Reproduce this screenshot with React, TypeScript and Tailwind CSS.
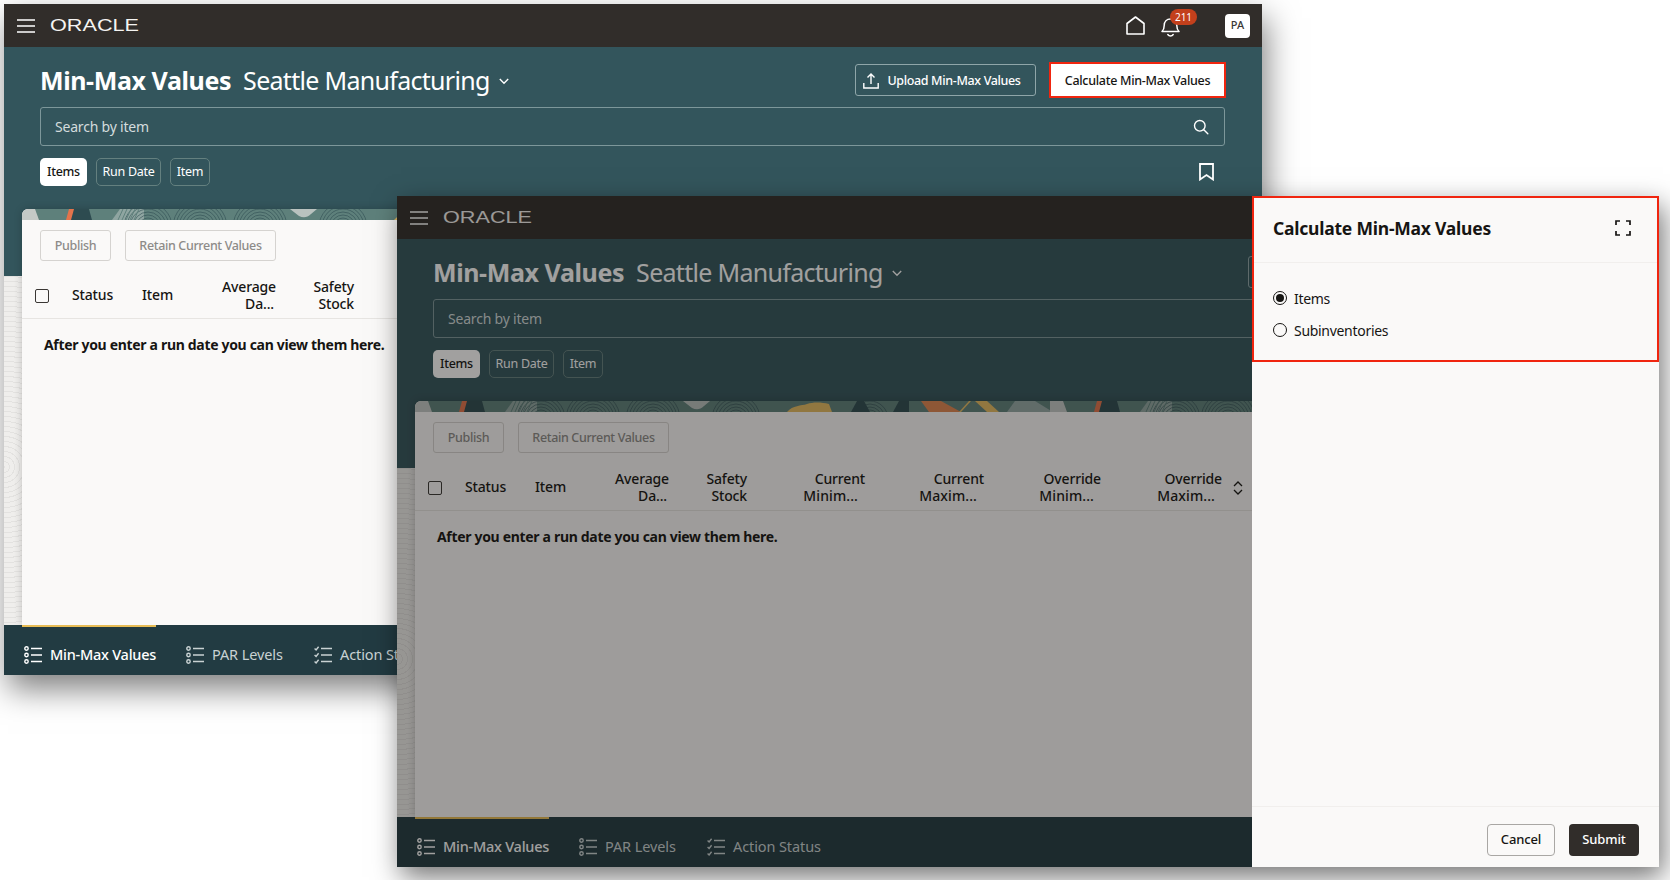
import React from "react";

const Hamburger = () => (
  <svg width="18" height="14" viewBox="0 0 18 14" fill="none" stroke="currentColor" strokeWidth="1.6">
    <path d="M0 1h18M0 7h18M0 13h18" />
  </svg>
);

const Logo = () => (
  <svg width="96" height="16" viewBox="0 0 96 16" className="block overflow-visible">
    <text x="0" y="13" textLength="89" lengthAdjust="spacingAndGlyphs" fontFamily="'Liberation Sans', sans-serif" fontSize="16.6" fill="#f5f4f2">
      ORACLE
    </text>
  </svg>
);

const HomeIcon = () => (
  <svg width="19" height="19" viewBox="0 0 19 19" fill="none" stroke="white" strokeWidth="1.6" strokeLinejoin="round">
    <path d="M1 7.5 9.5 1 18 7.5V18H1Z" />
  </svg>
);

const BellIcon = () => (
  <svg width="19" height="20" viewBox="0 0 19 20" fill="none" stroke="white" strokeWidth="1.5" strokeLinejoin="round" strokeLinecap="round">
    <path d="M1 14.5c1.6-1.4 2.2-3 2.2-6C3.2 4.7 5.8 2 9.5 2s6.300 2.700 6.300 6.500c0 3 .6 4.600 2.200 6Z" />
    <path d="M6.800 17.500c.7 1 1.600 1.500 2.700 1.500s2-.5 2.700-1.500" />
  </svg>
);

const UploadIcon = () => (
  <svg width="16" height="16" viewBox="0 0 16 16" fill="none" stroke="white" strokeWidth="1.4">
    <path d="M8 11V1M4.500 4.500 8 1l3.500 3.500M.8 10v5h14.400v-5" />
  </svg>
);

const SearchIcon = () => (
  <svg width="16" height="16" viewBox="0 0 16 16" fill="none" stroke="white" strokeWidth="1.4" strokeLinecap="round">
    <circle cx="6.800" cy="6.800" r="5.300" />
    <path d="m10.800 10.800 4 4" />
  </svg>
);

const BookmarkIcon = () => (
  <svg width="15" height="18" viewBox="0 0 15 18" fill="none" stroke="white" strokeWidth="1.8">
    <path d="M1 1h13v15.500l-6.500-4.500L1 16.500Z" />
  </svg>
);

const Chevron = () => (
  <svg width="10" height="7" viewBox="0 0 10 7" fill="none" stroke="white" strokeWidth="1.4">
    <path d="m.8 1 4.200 4.200L9.200 1" />
  </svg>
);

const ListIcon = () => (
  <svg width="18" height="18" viewBox="0 0 18 18" fill="none" stroke="currentColor" strokeWidth="1.4">
    <circle cx="2.500" cy="2.500" r="1.700" />
    <circle cx="2.500" cy="9" r="1.700" />
    <circle cx="2.500" cy="15.500" r="1.700" />
    <path d="M7 2.500h11M7 9h11M7 15.500h11" strokeWidth="1.600" />
  </svg>
);

const ChecksIcon = () => (
  <svg width="18" height="18" viewBox="0 0 18 18" fill="none" stroke="currentColor" strokeWidth="1.4">
    <path d="m.6 2.500 1.500 1.500L4.600.8M.6 9l1.500 1.500 2.500-3.200M.6 15.500 2.100 17l2.500-3.200" />
    <path d="M7 2.500h11M7 9h11M7 15.500h11" strokeWidth="1.600" />
  </svg>
);

const SortIcon = () => (
  <svg width="10" height="14" viewBox="0 0 10 14" fill="none" stroke="#161513" strokeWidth="1.300">
    <path d="m1 5 4-4 4 4M1 9l4 4 4-4" />
  </svg>
);

const ExpandIcon = () => (
  <svg width="16" height="16" viewBox="0 0 16 16" fill="none" stroke="#161513" strokeWidth="1.700">
    <path d="M1 5V1h4M11 1h4v4M15 11v4h-4M5 15H1v-4" />
  </svg>
);

const arcs: [number, number][] = [
  [126, 24],
  [178, 27],
  [238, 27],
  [321, 24],
  [455, 18],
];

const Strip = ({ id }: { id: string }) => (
  <svg width="1240" height="11" className="block shrink-0">
    <defs>
      <pattern id={id} x="0" y="0" width="635" height="11" patternUnits="userSpaceOnUse">
        <rect width="635" height="11" fill="#5e807b" />
        <path d="M0 0h13l4 11H0Z" fill="#c4c9c6" />
        <path d="M50 0h17l3 11H46Z" fill="#2d4b50" />
        <path d="M44 11l3-11h5l-3 11Z" fill="#e3734b" />
        <path d="M90 11l8-11h24v11Z" fill="#8fa5a1" />
        <path d="M268 0h27l-6 5c-4 4-8 4-12 2Z" fill="#b9c2bf" />
        {arcs.map(([cx, rmax]) =>
          [3, 6, 9, 12, 15, 18, 21, 24, 27]
            .filter((r) => r <= rmax)
            .map((r) => <circle key={`${cx}-${r}`} cx={cx} cy="18" r={r} fill="none" stroke="#2d4b50" strokeWidth="0.6" />)
        )}
        <path d="M96 11l5-11M100 11l5-11M104 11l5-11M108 11l5-11M112 11l5-11" stroke="#5e807b" strokeWidth="1" />
        <path d="M372 11c6-7 14-6 20-8s14-2 22 0l3 8Z" fill="#e4bb62" />
        <path d="M436 11l6-11h7l6 11Z" fill="#2d4b50" />
        <path d="M478 11l6-11h10v11Z" fill="#2d4b50" />
        <path d="M506 0h20l20 11h-32Z" fill="#e08550" />
        <path d="M544 11l10-11h2l-10 11Z" fill="#e4bb62" />
        <path d="M560 0h12l12 11h-12Z" fill="#e4bb62" />
        <path d="M600 0h20l18 11h-46Z" fill="#94a8a6" />
      </pattern>
    </defs>
    <rect width="1240" height="11" fill={`url(#${id})`} />
  </svg>
);

const headers: { lines: string[]; right: boolean; tail: string }[] = [
  { lines: ["Status"], right: false, tail: "" },
  { lines: ["Item"], right: false, tail: "" },
  { lines: ["Average", "Da..."], right: true, tail: "pr-[2px]" },
  { lines: ["Safety", "Stock"], right: true, tail: "" },
  { lines: ["Current", "Minim..."], right: true, tail: "pr-[7px] tracking-[0.1px]" },
  { lines: ["Current", "Maxim..."], right: true, tail: "pr-[7px] tracking-[0.1px]" },
  { lines: ["Override", "Minim..."], right: true, tail: "pr-[7px] tracking-[0.1px]" },
  { lines: ["Override", "Maxim..."], right: true, tail: "pr-[7px] tracking-[0.1px]" },
];

const tabs = [
  { label: "Min-Max Values", icon: <ListIcon />, active: true, width: "w-[134px]" },
  { label: "PAR Levels", icon: <ListIcon />, active: false, width: "w-[100px]" },
  { label: "Action Status", icon: <ChecksIcon />, active: false, width: "w-[125px]" },
];

function AppWindow({ front }: { front: boolean }) {
  const shown = front ? headers : headers.slice(0, 4);
  return (
    <div className="flex h-[671px] w-[1258px] flex-col">
      <div className="flex h-[43px] shrink-0 items-center bg-[#312d2a] pl-[13px] pr-[12px] text-white">
        <Hamburger />
        <div className="ml-[15px]">
          <Logo />
        </div>
        {front ? null : (
          <div className="ml-auto flex items-center">
            <span className="mr-[-1px]">
              <HomeIcon />
            </span>
            <div className="relative ml-[17px] mt-[2px]">
              <BellIcon />
              <span className="absolute left-[9px] top-[-8px] flex h-[16px] w-[27px] items-center justify-center rounded-full bg-[#c3401c] text-[10px] leading-none text-white">
                211
              </span>
            </div>
            <div className="ml-[45px] flex h-[24px] w-[25px] items-center justify-center rounded-[4px] bg-white text-[11px] font-medium text-[#3b3835]">
              PA
            </div>
          </div>
        )}
      </div>
      <div className="flex min-h-0 flex-1 flex-col bg-[linear-gradient(#33555c_229px,transparent_229px),repeating-radial-gradient(circle_at_0px_420px,#e3e2e0_0_1px,#efeeec_1px_5px)]">
        <div className="shrink-0 px-[36px] pt-[15px]">
          <div className="flex h-[36px] items-center text-white">
            <span className="mt-[2px] text-[25px] font-bold tracking-[-0.4px]">Min-Max Values</span>
            <span className="ml-[12px] mt-[2px] text-[25px] tracking-[-0.7px]">Seattle Manufacturing</span>
            <span className="ml-[9px] mt-[3px]">
              <Chevron />
            </span>
            <button className="ml-auto flex h-[32px] w-[181px] items-center justify-center gap-[8px] rounded-[3px] border border-[#8fa6a9] pr-[7px] pt-[2px] text-[12.500px] font-medium tracking-[-0.35px] text-white">
              {front ? null : (
                <>
                  <UploadIcon />
                  Upload Min-Max Values
                </>
              )}
            </button>
            <button className="ml-[13px] h-[36px] w-[177px] border-[2px] border-[#f0250f] bg-white pt-[2px] text-[12.500px] font-medium tracking-[-0.3px] text-[#161513]">
              {front ? null : "Calculate Min-Max Values"}
            </button>
          </div>
          <div className="mr-[1px] mt-[9px] flex h-[39px] items-center justify-between rounded-[3px] border border-[#7d979a] pl-[14px] pr-[15px] text-[14px] tracking-[-0.2px] text-[#d3dcdd]">
            <span>Search by item</span>
            {front ? null : <SearchIcon />}
          </div>
          <div className="mt-[12px] flex h-[28px] items-center gap-[9px] text-[12.500px] tracking-[-0.3px]">
            <span className="flex h-full w-[47px] items-center justify-center rounded-[5px] bg-white font-medium text-[#161513]">Items</span>
            <span className="flex h-full w-[65px] items-center justify-center rounded-[5px] border border-[#64807f] text-white">Run Date</span>
            <span className="flex h-full w-[40px] items-center justify-center rounded-[5px] border border-[#64807f] text-white">Item</span>
            {front ? null : (
              <span className="ml-auto mr-[12px]">
                <BookmarkIcon />
              </span>
            )}
          </div>
        </div>
        <div className="mx-[18px] mt-[23px] flex min-h-0 flex-1 flex-col overflow-hidden rounded-t-[6px] bg-[#faf9f8] shadow-[0_0_8px_rgba(0,0,0,0.2)]">
          <Strip id={front ? "strip-front" : "strip-back"} />
          <div className="mt-[10px] flex h-[31px] shrink-0 gap-[14px] pl-[18px] text-[12.500px] font-medium tracking-[-0.35px] text-[#8d8b88]">
            <span className="flex w-[71px] items-center justify-center rounded-[3px] border border-[#d5d3d0] pt-[1px]">Publish</span>
            <span className="flex w-[151px] items-center justify-center rounded-[3px] border border-[#d5d3d0] pt-[1px]">Retain Current Values</span>
          </div>
          <div className="mt-[13px] grid h-[45px] shrink-0 grid-cols-[50px_70px_70px_64px_78px_118px_119px_117px_121px_40px] items-center border-b border-[#e7e5e2] pb-[3px] text-[14px] font-medium leading-[17px] tracking-[-0.15px] text-[#161513]">
            <span className="ml-[13px] mt-[2px] h-[14px] w-[14px] rounded-[2px] border-[1.500px] border-[#3a3734]" />
            {shown.map((h) => (
              <span key={h.lines.join("")} className={h.right ? "text-right" : ""}>
                {h.lines.map((l, i) => (
                  <span key={l} className={`block ${i === 1 ? h.tail : ""}`}>
                    {l}
                  </span>
                ))}
              </span>
            ))}
            {front ? (
              <span className="col-start-10 ml-[11px] mt-[2px]">
                <SortIcon />
              </span>
            ) : null}
          </div>
          <div className="ml-[22px] mt-[16px] whitespace-nowrap text-[14px] font-bold leading-[20px] tracking-[-0.32px] text-[#161513]">
            After you enter a run date you can view them here.
          </div>
        </div>
        <div className="flex h-[50px] shrink-0 bg-[#223b42] pl-[18px]">
          {tabs.map((t) => (
            <div
              key={t.label}
              className={`mr-[28px] flex shrink-0 items-center gap-[8px] border-t-2 pt-[7px] text-[14.500px] ${t.width} ${
                t.active ? "border-[#e8bd55] font-medium tracking-[-0.25px] text-white" : "border-transparent tracking-[-0.1px] text-[#c9d2d3]"
              }`}
            >
              <span className="ml-[2px] shrink-0">{t.icon}</span>
              <span className="whitespace-nowrap">{t.label}</span>
            </div>
          ))}
        </div>
      </div>
    </div>
  );
}

function Radio({ label, checked }: { label: string; checked: boolean }) {
  return (
    <div className="flex h-[20px] items-center gap-[7px] text-[14px] tracking-[-0.3px] text-[#161513]">
      <span className="flex h-[14px] w-[14px] items-center justify-center rounded-full border-[1.500px] border-[#161513]">
        {checked ? <span className="h-[8px] w-[8px] rounded-full bg-[#161513]" /> : null}
      </span>
      {label}
    </div>
  );
}

function Drawer() {
  return (
    <div className="flex w-[407px] shrink-0 flex-col bg-[#faf9f8]">
      <div className="h-[166px] shrink-0 border-[2px] border-[#f0250f]">
        <div className="flex h-[65px] items-center justify-between border-b border-[#f1efed] pb-[4px] pl-[19px] pr-[26px]">
          <span className="text-[17.500px] font-bold tracking-[-0.22px] text-[#161513]">Calculate Min-Max Values</span>
          <ExpandIcon />
        </div>
        <div className="flex flex-col gap-[12px] pl-[19px] pt-[25px]">
          <Radio label="Items" checked />
          <Radio label="Subinventories" checked={false} />
        </div>
      </div>
      <div className="flex-1" />
      <div className="flex h-[61px] shrink-0 items-start justify-end gap-[14px] border-t border-[#f1efed] pr-[20px] pt-[17px] text-[13px] font-medium tracking-[-0.15px]">
        <button className="h-[32px] w-[68px] rounded-[4px] border border-[#a9a7a4] text-[#161513]">Cancel</button>
        <button className="h-[32px] w-[70px] rounded-[4px] bg-[#312d2a] text-white">Submit</button>
      </div>
    </div>
  );
}

export default function App() {
  return (
    <div className="relative h-[880px] w-[1670px] overflow-hidden bg-white font-['Noto_Sans',sans-serif]">
      <div className="absolute left-[4px] top-[4px] overflow-hidden shadow-[4px_14px_30px_rgba(0,0,0,0.5)]">
        <AppWindow front={false} />
      </div>
      <div className="absolute left-[397px] top-[196px] flex h-[671px] shadow-[4px_10px_26px_rgba(0,0,0,0.55)]">
        <div className="relative w-[855px] overflow-hidden">
          <AppWindow front />
          <div className="absolute inset-0 bg-[#14120f]/40" />
        </div>
        <Drawer />
      </div>
    </div>
  );
}
